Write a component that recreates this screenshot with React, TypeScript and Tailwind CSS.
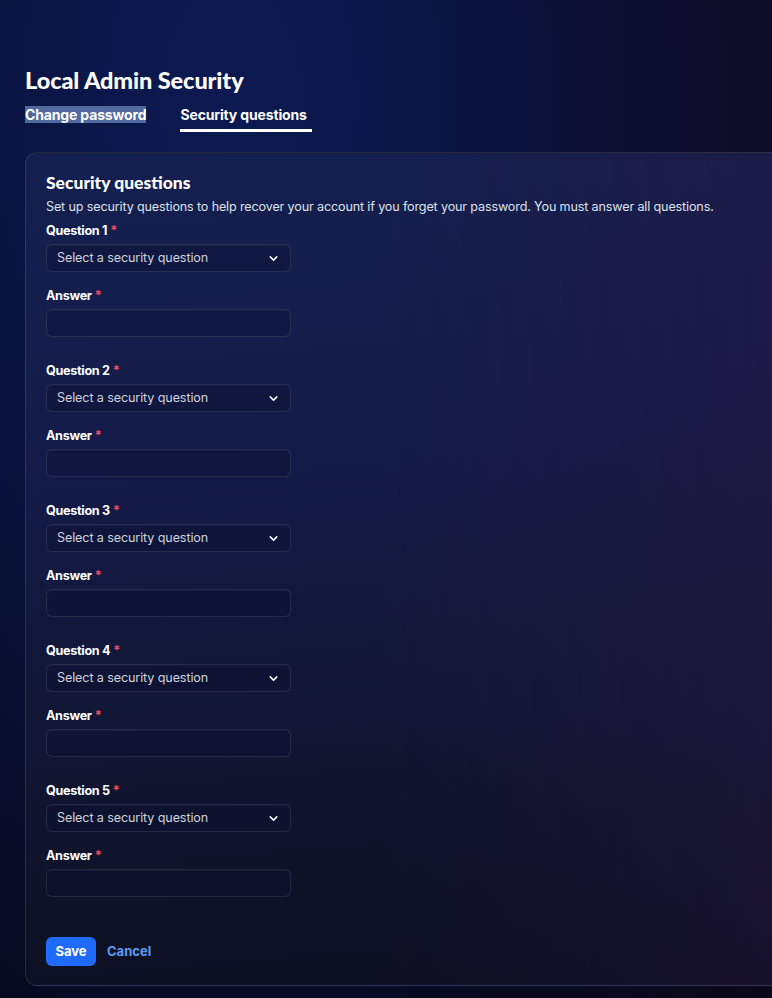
import React from "react";
import { ChevronDown } from "lucide-react";

function Field({ n }: { n: number }) {
  return (
    <div className="flex flex-col">
      <label className="flex h-4 items-center text-[12.6px] font-bold leading-4 tracking-[-0.3px] text-white">
        Question {n}
        <span className="ml-[3px] text-[#e2506a]">*</span>
      </label>
      <div className="mt-[5px] flex h-7 w-[245px] items-center justify-between rounded-md border border-white/10 bg-[#0a1030]/40 pl-[10px] pr-[10px] text-[12.6px] tracking-[-0.12px] text-[#cdd2de] shadow-[inset_0_1px_0_rgba(255,255,255,0.04)]">
        <span>Select a security question</span>
        <ChevronDown size={13} strokeWidth={2.75} className="text-white" />
      </div>
      <label className="mt-4 flex h-4 items-center text-[12.6px] font-bold leading-4 tracking-[-0.3px] text-white">
        Answer
        <span className="ml-[3px] text-[#e2506a]">*</span>
      </label>
      <div className="mt-[5px] h-7 w-[245px] rounded-md border border-white/10 bg-[#0a1030]/40 shadow-[inset_0_1px_0_rgba(255,255,255,0.04)]" />
    </div>
  );
}

export default function App() {
  return (
    <div
      className="relative h-[998px] w-full overflow-hidden bg-[linear-gradient(90deg,transparent_55%,rgba(24,12,44,0.45)_100%),radial-gradient(ellipse_at_30%_10%,#0c1a52_0%,#0a1440_35%,#070b24_70%,#03050e_100%)] pt-[66px] text-white"
      style={{ fontFamily: "Inter, 'Noto Sans', sans-serif" }}
    >
      <div className="pl-[25px]">
        <h1 className="text-[23.5px] font-black leading-7 tracking-[-0.1px] text-white" style={{ fontFamily: "Lato, Inter, sans-serif" }}>
          Local Admin Security
        </h1>
        <div className="mt-[11px] flex gap-[34px] text-[14px] font-bold leading-5 tracking-[-0.15px]">
          <div className="pb-[7px]">
            <span className="bg-[#50699e] text-white">Change password</span>
          </div>
          <div className="border-b-[3px] border-white pb-1 pr-[5px]">Security questions</div>
        </div>
      </div>

      <div className="ml-[25px] mt-5 w-[790px] rounded-xl border border-white/10 bg-[linear-gradient(90deg,transparent_45%,rgba(40,22,64,0.45)_100%),linear-gradient(175deg,#142050_0%,#141b48_35%,#111634_65%,#0c0f1d_100%)] pb-[19px] pl-5 pt-[18px]">
        <h2 className="text-[17.5px] font-black leading-6 text-white" style={{ fontFamily: "Lato, Inter, sans-serif" }}>
          Security questions
        </h2>
        <p className="mt-[3px] text-[12.6px] leading-[18px] tracking-[-0.15px] text-[#dde1ea]">
          Set up security questions to help recover your account if you forget your password. You must answer all questions.
        </p>
        <div className="mt-[7px] flex flex-col gap-[26px]">
          {[1, 2, 3, 4, 5].map((n) => (
            <Field key={n} n={n} />
          ))}
        </div>
        <div className="mt-10 flex items-center gap-[11px]">
          <button className="flex h-[29px] w-[50px] items-center justify-center rounded-md bg-[#1f6bff] text-[13px] font-bold text-white">
            Save
          </button>
          <button className="text-[13px] font-bold text-[#5b9cf2]">Cancel</button>
        </div>
      </div>
    </div>
  );
}
